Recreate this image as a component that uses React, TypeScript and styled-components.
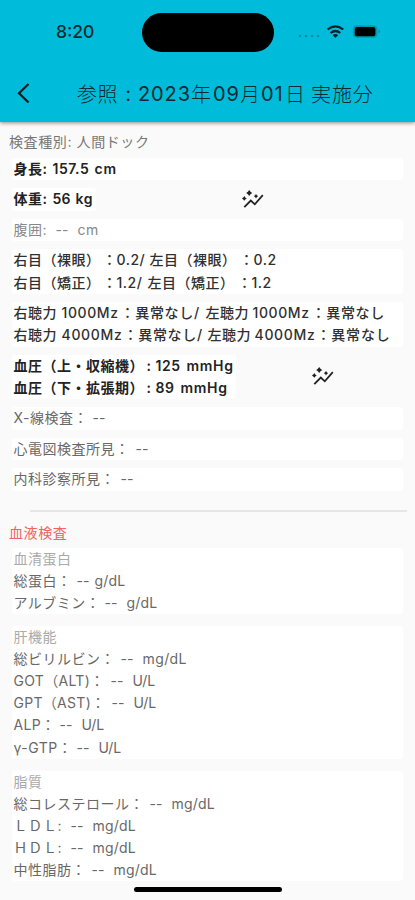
import React from 'react';
import styled, { createGlobalStyle } from 'styled-components';

const GlobalStyle = createGlobalStyle`
  * { box-sizing: border-box; }
  body { margin: 0; background: #fafafa; }
`;

const Screen = styled.main`
  position: relative;
  width: 415px;
  height: 900px;
  overflow: hidden;
  display: flex;
  flex-direction: column;
  background: #fafafa;
  color: #222;
  font-family: Inter, 'Noto Sans CJK JP', sans-serif;
  text-spacing-trim: space-all;
`;

const Header = styled.header`
  flex: none;
  height: 122px;
  background: #00bcda;
  box-shadow: 0 1px 4px rgba(0, 0, 0, 0.45);
  color: #0b2a31;
`;

const StatusBar = styled.div`
  height: 64px;
  display: grid;
  grid-template-columns: 142px 132px 1fr;
  align-items: center;
`;

const Clock = styled.span`
  padding-left: 56px;
  font-size: 17.5px;
  font-weight: 500;
  line-height: 20px;
`;

const Island = styled.span`
  height: 39px;
  border-radius: 20px;
  background: #000;
`;

const StatusIcons = styled.span`
  padding-left: 24px;
  display: flex;
  svg { display: block; }
`;

const NavBar = styled.div`
  height: 58px;
  display: grid;
  grid-template-columns: 77px 1fr;
  align-items: center;
`;

const BackButton = styled.button`
  width: 40px;
  height: 40px;
  padding: 0 0 0 14px;
  border: 0;
  background: none;
  svg { display: block; }
`;

const Title = styled.h1`
  margin: 1px 0 0;
  display: flex;
  font-size: 20px;
  font-weight: 400;
  line-height: 28px;
  white-space: pre;
`;

const TitlePart = styled.span<{ $w: number; $spacing?: number; $light?: boolean }>`
  width: ${(p) => p.$w}px;
  letter-spacing: ${(p) => p.$spacing ?? 0.5}px;
  font-family: ${(p) => (p.$light ? "'Noto Sans CJK JP Light', 'Noto Sans CJK JP'" : 'inherit')}, sans-serif;
  font-weight: ${(p) => (p.$light ? 300 : 400)};
`;

const Content = styled.section`
  padding: 9px 12px 0 9px;
`;

const Caption = styled.h2<{ $red?: boolean; $after: number }>`
  height: 22px;
  margin: 0 0 ${(p) => p.$after}px;
  line-height: 22px;
  font-size: 14px;
  font-weight: 400;
  letter-spacing: 0.6px;
  color: ${(p) => (p.$red ? '#f4635f' : '#777')};
  white-space: pre;
`;

const Divider = styled.hr`
  height: 2px;
  margin: 19px -4px 10px 21px;
  border: 0;
  background: #e6e6e6;
`;

const Row = styled.div<{ $gap: number }>`
  display: flex;
  align-items: center;
  margin-bottom: ${(p) => p.$gap}px;
`;

const Card = styled.div<{ $w?: number }>`
  width: ${(p) => p.$w ?? 391}px;
  margin-left: 3px;
  padding-left: 1.5px;
  border-radius: 3px;
  background: #fff;
`;

type Tone = 'strong' | 'medium' | 'normal' | 'muted' | 'faint';
const tones: Record<Tone, [string, number]> = {
  strong: ['#222', 600],
  medium: ['#303030', 500],
  normal: ['#686868', 400],
  muted: ['#888', 400],
  faint: ['#aaa', 400],
};

const Line = styled.div<{ $tone: Tone }>`
  display: flex;
  height: 22.2px;
  line-height: 22.5px;
  font-size: 14px;
  letter-spacing: 0.5px;
  white-space: pre;
  color: ${(p) => tones[p.$tone][0]};
  font-weight: ${(p) => tones[p.$tone][1]};
`;

const Part = styled.span<{ $w?: number; $spacing?: number }>`
  flex: none;
  width: ${(p) => (p.$w ? `${p.$w}px` : 'auto')};
  letter-spacing: ${(p) => p.$spacing ?? 0.5}px;
`;

const InsightButton = styled.button<{ $left: number }>`
  margin-left: ${(p) => p.$left}px;
  padding: 0;
  border: 0;
  background: none;
  svg { display: block; }
`;

const HomeIndicator = styled.div`
  position: absolute;
  left: 134px;
  bottom: 8px;
  width: 148px;
  height: 5px;
  border-radius: 3px;
  background: #000;
`;

/* Each part is [text, column width, letter spacing]. */
type PartData = [string, number?, number?];
type LineData = { tone: Tone; parts: PartData[] };
type CardData = { lines: LineData[]; gap?: number; width?: number; insight?: number };

const line = (tone: Tone, ...parts: PartData[]): LineData => ({ tone, parts });

const basics: CardData[] = [
  { lines: [line('strong', ['身長:', 39], ['157.5', 42, 0.5], ['cm', undefined, 0.9])] },
  { lines: [line('strong', ['体重:', 39], ['56', 23, 0.3], ['kg', undefined, 0.5])], width: 84, insight: 145 },
  { lines: [line('muted', ['腹囲:', 42], ['--', 22, 0], ['cm', undefined, 0.5])] },
  {
    lines: [
      line('medium', ['右目（裸眼）', 89], ['：', 14], ['0.2/', 33], ['左目（裸眼）', 90], ['：', 14], ['0.2']),
      line('medium', ['右目（矯正）', 89], ['：', 14], ['1.2/', 31], ['左目（矯正）', 90], ['：', 14], ['1.2']),
    ],
  },
  {
    lines: [
      line('medium', ['右聴力', 48], ['1000Mz', 59, 0.6], ['：異常なし/', 85, 0.7], ['左聴力', 47], ['1000Mz', 59, 0.6], ['：異常なし', undefined, 0.7]),
      line('medium', ['右聴力', 48], ['4000Mz', 62, 0.7], ['：異常なし/', 84, 0.7], ['左聴力', 47], ['4000Mz', 62, 0.7], ['：異常なし', undefined, 0.8]),
    ],
  },
  {
    lines: [
      line('strong', ['血圧（上・収縮機）', 133], [':', 9], ['125', 31], ['mmHg', undefined, 0.7]),
      line('strong', ['血圧（下・拡張期）', 133], [':', 9], ['89', 25], ['mmHg', undefined, 0.7]),
    ],
    width: 224,
    insight: 75,
  },
  { lines: [line('normal', ['X-線検査：', 79], ['--', undefined, 0])] },
  { lines: [line('normal', ['心電図検査所見：', 122], ['--', undefined, 0])] },
  { lines: [line('normal', ['内科診察所見：', 107], ['--', undefined, 0])] },
];

const bloodTests: CardData[] = [
  {
    gap: 11.5,
    lines: [
      line('faint', ['血清蛋白']),
      line('normal', ['総蛋白：', 63], ['--', 18, 0], ['g/dL', undefined, 0.2]),
      line('normal', ['アルブミン：', 91], ['--', 22, 0], ['g/dL', undefined, 0.2]),
    ],
  },
  {
    gap: 11.7,
    lines: [
      line('faint', ['肝機能']),
      line('normal', ['総ビリルビン：', 107], ['--', 22, 0], ['mg/dL', undefined, 0.4]),
      line('normal', ['GOT（ALT)：', 97, 0.3], ['--', 22, 0], ['U/L', undefined, 0]),
      line('normal', ['GPT（AST)：', 98, 0.3], ['--', 22, 0], ['U/L', undefined, 0]),
      line('normal', ['ALP：', 46, 0.3], ['--', 22, 0], ['U/L', undefined, 0]),
      line('normal', ['γ-GTP：', 63], ['--', 22, 0], ['U/L', undefined, 0]),
    ],
  },
  {
    lines: [
      line('faint', ['脂質']),
      line('normal', ['総コレステロール：', 136], ['--', 22, 0], ['mg/dL', undefined, 0.2]),
      line('normal', ['ＬＤＬ:', 57, 0.7], ['--', 22, 0], ['mg/dL', undefined, 0.2]),
      line('normal', ['ＨＤＬ:', 57, 0.7], ['--', 22, 0], ['mg/dL', undefined, 0.2]),
      line('normal', ['中性脂肪：', 78], ['--', 22, 0], ['mg/dL', undefined, 0.2]),
    ],
  },
];

function InsightIcon() {
  return (
    <svg width="23" height="20" viewBox="0 0 23 20">
      <path d="M3.3 17.1 9.8 10.5l4 3.8 8-9.2" fill="none" stroke="#222" strokeWidth="1.8" />
      <g fill="#222">
        <path d="m8.2 0 1.3 1.7L11.200 3 9.500 4.300 8.200 6 6.900 4.300 5.200 3 6.900 1.700z" />
        <path d="m3.300 6 1 1.400 1.400 1-1.400 1-1 1.400-1-1.400-1.400-1 1.400-1z" />
        <path d="m15 4 .9 1.300 1.300.9-1.300.9-.9 1.300-.9-1.300-1.300-.9 1.300-.9z" />
      </g>
    </svg>
  );
}

function ResultCard({ data }: { data: CardData }) {
  return (
    <Row $gap={data.gap ?? 8.3}>
      <Card $w={data.width}>
        {data.lines.map((l, i) => (
          <Line key={i} $tone={l.tone}>
            {l.parts.map(([text, width, spacing], j) => (
              <Part key={j} $w={width} $spacing={spacing}>{text}</Part>
            ))}
          </Line>
        ))}
      </Card>
      {data.insight !== undefined && (
        <InsightButton $left={data.insight} aria-label="グラフ"><InsightIcon /></InsightButton>
      )}
    </Row>
  );
}

export default function App() {
  return (
    <Screen>
      <GlobalStyle />
      <Header>
        <StatusBar>
          <Clock>8:20</Clock>
          <Island />
          <StatusIcons>
            <svg width="84" height="20" viewBox="0 0 84 20">
              <g fill="#078ca3">
                <circle cx="2" cy="14" r="1.3" /><circle cx="8" cy="14" r="1.3" />
                <circle cx="14" cy="14" r="1.3" /><circle cx="20" cy="14" r="1.3" />
              </g>
              <g fill="none" stroke="#042128" strokeWidth="2.2">
                <path d="M29.600 7.500q7.800-6.400 15.600 0M32.600 11q4.800-4 9.600 0" />
              </g>
              <path d="M34.600 13q2.800-2 5.600 0l-2.800 3z" fill="#042128" />
              <rect x="54.8" y="3.3" width="24.6" height="12.4" rx="4" fill="#0696af" />
              <rect x="56.8" y="5" width="20.6" height="9.2" rx="2" fill="#000" />
              <path d="M80.500 7.500q3 2 0 4z" fill="#078ca3" />
            </svg>
          </StatusIcons>
        </StatusBar>
        <NavBar>
          <BackButton aria-label="戻る">
            <svg width="18" height="24" viewBox="0 0 18 24">
              <path d="M14.500 3 5 12.200l9.500 9.300" fill="none" stroke="#05191e" strokeWidth="2.2" />
            </svg>
          </BackButton>
          <Title>
            <TitlePart $w={42} $light>参照</TitlePart>
            <TitlePart $w={19}> : </TitlePart>
            <TitlePart $w={53} $spacing={0.9}>2023</TitlePart>
            <TitlePart $w={22} $light>年</TitlePart>
            <TitlePart $w={27} $spacing={0.9}>09</TitlePart>
            <TitlePart $w={21} $light>月</TitlePart>
            <TitlePart $w={24} $spacing={0.9}>01</TitlePart>
            <TitlePart $w={26} $light>日</TitlePart>
            <TitlePart $w={66} $spacing={0.9} $light>実施分</TitlePart>
          </Title>
        </NavBar>
      </Header>
      <Content>
        <Caption $after={5}>検査種別: 人間ドック</Caption>
        {basics.map((card, i) => <ResultCard key={i} data={card} />)}
        <Divider />
        <Caption $red $after={4}>血液検査</Caption>
        {bloodTests.map((card, i) => <ResultCard key={i} data={card} />)}
      </Content>
      <HomeIndicator />
    </Screen>
  );
}
